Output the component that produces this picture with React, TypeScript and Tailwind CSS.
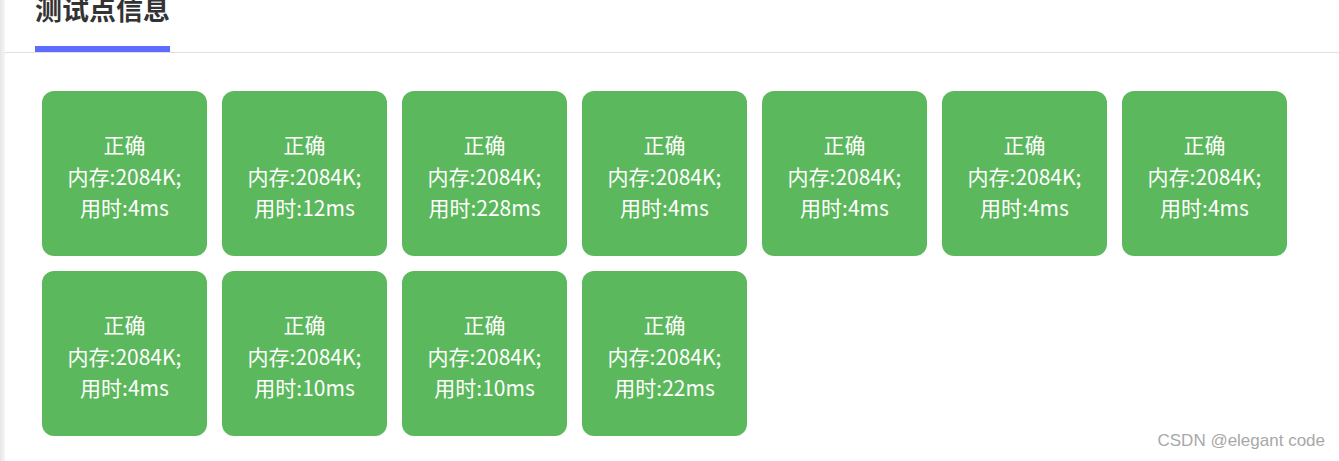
import React from 'react'

const cases = [
    { mem: '2084K', time: '4ms' },
    { mem: '2084K', time: '12ms' },
    { mem: '2084K', time: '228ms' },
    { mem: '2084K', time: '4ms' },
    { mem: '2084K', time: '4ms' },
    { mem: '2084K', time: '4ms' },
    { mem: '2084K', time: '4ms' },
    { mem: '2084K', time: '4ms' },
    { mem: '2084K', time: '10ms' },
    { mem: '2084K', time: '10ms' },
    { mem: '2084K', time: '22ms' },
]

const cjk = { fontFamily: '"Noto Sans CJK SC", "Noto Sans", sans-serif' }

const App = () => {
    return (
        <div className="relative flex h-[461px] w-full overflow-hidden bg-white" style={cjk}>
            <div className="w-[5px] shrink-0 bg-gradient-to-r from-[#e6e6e6] to-[#f6f6f6]" />
            <div className="flex flex-1 flex-col">
                <div className="h-[53px] shrink-0 border-b border-[#e0e0e0] pl-[30px]">
                    <div className="flex h-[52px] w-[135px] flex-col justify-between">
                        <span className="-mt-[5px] text-[27px] font-bold leading-[27px] text-[#333]">测试点信息</span>
                        <span className="h-[6px] w-full bg-[#5b6cff]" />
                    </div>
                </div>
                <div className="flex flex-wrap gap-[15px] pl-[37px] pt-[38px]">
                    {cases.map((c, i) => (
                        <div
                            key={i}
                            className="flex h-[165px] w-[165px] flex-col items-center justify-center rounded-[12px] bg-[#5cb85c] pt-[6px] text-[21px] leading-[31.5px] text-white"
                        >
                            <span>正确</span>
                            <span>内存:{c.mem};</span>
                            <span>用时:{c.time}</span>
                        </div>
                    ))}
                </div>
            </div>
            <span
                className="absolute bottom-[8px] right-[14px] text-[17px] text-[#a8a8a8]"
                style={{ fontFamily: '"Liberation Sans", Arial, sans-serif' }}
            >
                CSDN @elegant code
            </span>
        </div>
    )
}

export default App
